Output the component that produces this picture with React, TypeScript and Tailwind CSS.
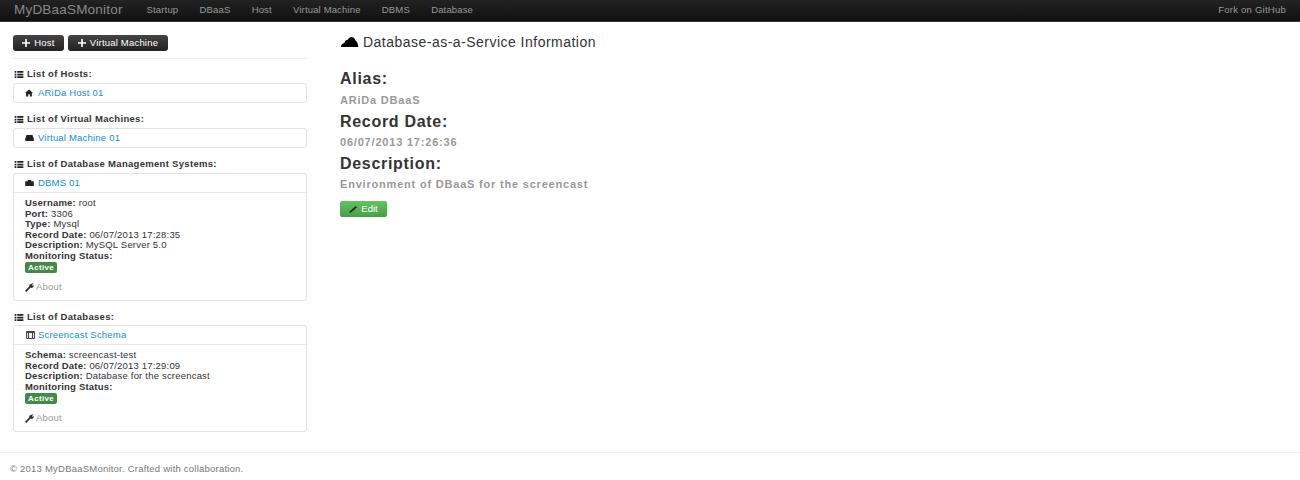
import type { ReactNode } from 'react'

const ListIcon = () => (
  <svg viewBox="0 0 10 8" className="mr-[3px] h-[7px] w-[10px] shrink-0 fill-[#222]">
    <path d="M0 0h2v2H0zM3 0h7v2H3zM0 3h2v2H0zM3 3h7v2H3zM0 6h2v2H0zM3 6h7v2H3z" />
  </svg>
)

const PlusIcon = () => (
  <svg viewBox="0 0 8 8" className="h-2 w-2 fill-white">
    <path d="M3.200 0h1.600v3.200H8v1.600H4.800V8H3.200V4.800H0V3.200h3.200z" />
  </svg>
)

const WrenchIcon = () => (
  <svg viewBox="0 0 10 10" className="h-[9px] w-[9px] fill-[#333]">
    <path d="M0 8.600 4.600 4C4.300 2.400 5.600.7 7.600.9L9.900 0 7.800 2.100 8.400 3 10 2.400C9.900 4.400 8 5.900 6 5.400L1.400 10z" />
  </svg>
)

const ActiveBadge = () => (
  <span className="mt-[1px] block w-fit rounded-[2px] bg-[#468847] px-[3px] text-[8px] font-bold leading-[11px] tracking-[0.35px] text-white">
    Active
  </span>
)

function ListTitle({ children }: { children: ReactNode }) {
  return (
    <h4 className="ml-[1px] flex h-3 items-center text-[9.5px] font-bold tracking-[0.3px] text-[#333]">
      <ListIcon />
      {children}
    </h4>
  )
}

function Field({ label, value }: { label: string; value?: string }) {
  return (
    <p className="h-[10.5px] leading-[10.5px]">
      <b>{label}:</b>
      {value ? ` ${value}` : ''}
    </p>
  )
}

function Card({ icon, title, children }: { icon: ReactNode; title: string; children?: ReactNode }) {
  return (
    <div className="rounded-[3px] border border-[#e3e3e3] text-[9.5px] tracking-[0.2px] text-[#333]">
      <div className="flex h-[18px] items-center pl-[11px]">
        <span className="flex w-[13px] items-center">{icon}</span>
        <a className="text-[#0f8fd6]">{title}</a>
      </div>
      {children && <div className="border-t border-[#e8e8e8] px-[11px] pb-[7px] pt-[5px]">{children}</div>}
    </div>
  )
}

function About() {
  return (
    <div className="mt-[8px] flex h-3 items-center gap-[2px] text-[#999]">
      <WrenchIcon />
      About
    </div>
  )
}

const navItems = ['Startup', 'DBaaS', 'Host', 'Virtual Machine', 'DBMS', 'Database']

export default function App() {
  return (
    <div className="h-[480px] w-[1300px] overflow-hidden bg-white font-['Liberation_Sans',Arial,sans-serif]">
      <nav className="flex h-[22px] items-center border-b border-[#333] bg-gradient-to-b from-[#222] to-[#111] pl-[14px] pr-[14px]">
        <span className="mr-[24px] text-[13.5px] tracking-[0.2px] text-[#888]">MyDBaaSMonitor</span>
        <div className="flex gap-[21.25px] text-[9.5px] tracking-[0.15px] text-[#999]">
          {navItems.map((n) => (
            <a key={n}>{n}</a>
          ))}
        </div>
        <a className="ml-auto text-[9.5px] tracking-[0.24px] text-[#999]">Fork on GitHub</a>
      </nav>

      <div className="flex h-[430px]">
        <aside className="ml-[13px] w-[294px] pt-[13px]">
          <div className="flex gap-[4px] border-b border-[#eee] pb-[7px]">
            <button className="flex h-4 w-[51px] items-center justify-center gap-[4px] rounded-[3px] bg-gradient-to-b from-[#444] to-[#222] text-[9.5px] tracking-[0.25px] text-white">
              <PlusIcon /> Host
            </button>
            <button className="flex h-4 w-[100px] items-center justify-center gap-[4px] rounded-[3px] bg-gradient-to-b from-[#444] to-[#222] text-[9.5px] tracking-[0.2px] text-white">
              <PlusIcon /> Virtual Machine
            </button>
          </div>

          <div className="mt-[9px]">
            <ListTitle>List of Hosts:</ListTitle>
            <div className="mt-[3px]">
              <Card
                title="ARiDa Host 01"
                icon={
                  <svg viewBox="0 0 10 9" className="h-2 w-2 fill-[#222]">
                    <path d="M5 0 10 4.600H8.600V9H6V6H4v3H1.400V4.600H0z" />
                  </svg>
                }
              />
            </div>
          </div>

          <div className="mt-[10px]">
            <ListTitle>List of Virtual Machines:</ListTitle>
            <div className="mt-[3px]">
              <Card
                title="Virtual Machine 01"
                icon={
                  <svg viewBox="0 0 10 7" className="h-[6px] w-[9px] fill-[#222]">
                    <path d="M1.500 0h7L10 4.500V7H0V4.500z" />
                  </svg>
                }
              />
            </div>
          </div>

          <div className="mt-[10px]">
            <ListTitle>List of Database Management Systems:</ListTitle>
            <div className="mt-[3px]">
              <Card
                title="DBMS 01"
                icon={
                  <svg viewBox="0 0 10 7" className="h-[6px] w-[9px] fill-[#222]">
                    <path d="M0 1.500h3V0h4v1.500h3V7H0z" />
                  </svg>
                }
              >
                <Field label="Username" value="root" />
                <Field label="Port" value="3306" />
                <Field label="Type" value="Mysql" />
                <Field label="Record Date" value="06/07/2013 17:28:35" />
                <Field label="Description" value="MySQL Server 5.0" />
                <Field label="Monitoring Status" />
                <ActiveBadge />
                <About />
              </Card>
            </div>
          </div>

          <div className="mt-[10px]">
            <ListTitle>List of Databases:</ListTitle>
            <div className="mt-[2px]">
              <Card
                title="Screencast Schema"
                icon={
                  <svg viewBox="0 0 9 8" className="ml-[1px] h-2 w-[9px] fill-none stroke-[#444]">
                    <path d="M.5.5h8v7h-8z" />
                    <path d="M1 1.500h7M2.500 2v5M6.500 2v5" strokeWidth="1.200" />
                  </svg>
                }
              >
                <Field label="Schema" value="screencast-test" />
                <Field label="Record Date" value="06/07/2013 17:29:09" />
                <Field label="Description" value="Database for the screencast" />
                <Field label="Monitoring Status" />
                <ActiveBadge />
                <About />
              </Card>
            </div>
          </div>
        </aside>

        <main className="ml-[33px] flex-1 pt-[13px]">
          <h3 className="flex h-[14px] items-center gap-[4px] text-[14px] tracking-[0.48px] text-[#333]">
            <svg viewBox="0 0 19 11" className="h-[10px] w-[19px] fill-black">
              <path d="M0 11c0-2.500 1.600-4 3.600-4.200C4.400 4.300 6 3 7.700 3 8.700 1 10.200 0 11.800 0c2.200 0 3.700 1.500 4 3.600C17.800 4.600 19 7.500 19 11z" />
            </svg>
            Database-as-a-Service Information
          </h3>

          <h4 className="mt-[21px] text-[16px] font-bold leading-[18px] tracking-[0.7px] text-[#333]">Alias:</h4>
          <p className="mt-[6px] text-[11px] font-bold leading-[12px] tracking-[0.8px] text-[#999]">ARiDa DBaaS</p>
          <h4 className="mt-[7px] text-[16px] font-bold leading-[18px] tracking-[0.7px] text-[#333]">Record Date:</h4>
          <p className="mt-[5px] text-[11px] font-bold leading-[12px] tracking-[0.8px] text-[#999]">06/07/2013 17:26:36</p>
          <h4 className="mt-[7px] text-[16px] font-bold leading-[18px] tracking-[0.7px] text-[#333]">Description:</h4>
          <p className="mt-[5px] text-[11px] font-bold leading-[12px] tracking-[0.8px] text-[#999]">
            Environment of DBaaS for the screencast
          </p>

          <button className="mt-[11px] flex h-[16px] w-[47px] items-center justify-center gap-[3px] rounded-[2px] bg-gradient-to-b from-[#62c462] to-[#45a045] text-[9.5px] text-white">
            <svg viewBox="0 0 10 9" className="h-2 w-[9px] fill-[#222]">
              <path d="M0 9 1 7 7.500 1 9 2.400 2.600 8.200z" />
            </svg>
            Edit
          </button>
        </main>
      </div>

      <footer className="flex h-[28px] items-start border-t border-[#eee] pl-[10px] pt-[10px] text-[9.5px] leading-[12px] tracking-[0.22px] text-[#777]">
        © 2013 MyDBaaSMonitor. Crafted with collaboration.
      </footer>
    </div>
  )
}
